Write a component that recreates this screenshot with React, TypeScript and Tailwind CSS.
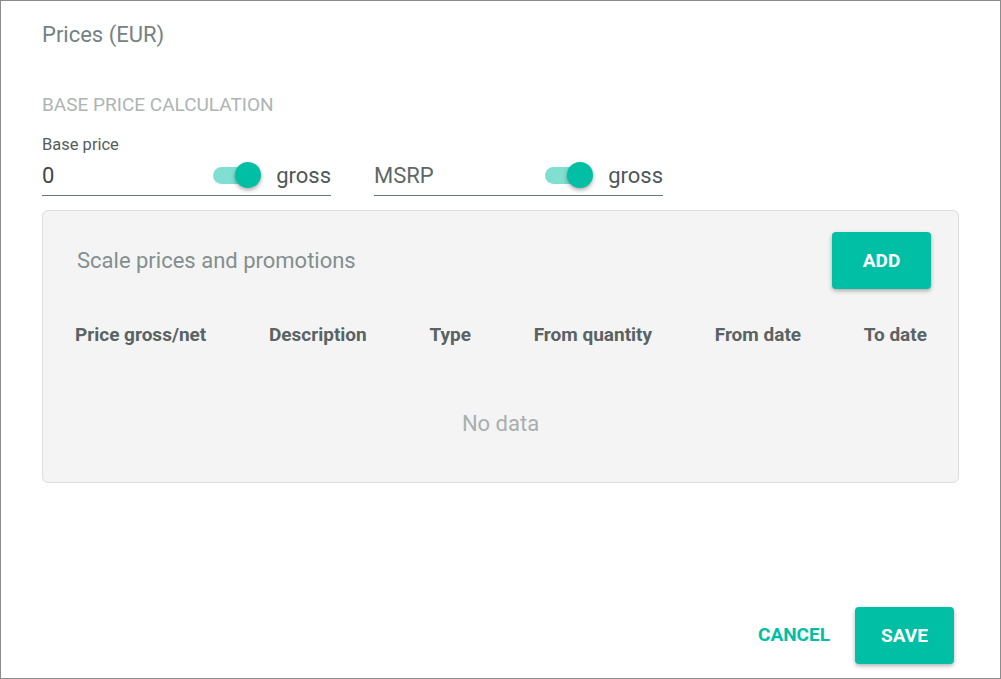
import React from "react"

const Toggle = () => (
  <div className="relative w-[50px] h-[28px] flex items-center">
    <div className="w-[44px] h-[17px] rounded-full bg-[#80dfd1]" />
    <div className="absolute right-[2px] top-[1px] w-[26px] h-[26px] rounded-full bg-[#00bfa5] shadow-[0_2px_4px_rgba(0,0,0,0.35)]" />
  </div>
)

const PriceField = ({ label, value }: { label?: string; value: string }) => (
  <div className="w-[289px]">
    <div className="h-[20px] text-[16.5px] text-[#555d5d] leading-[20px]">{label}</div>
    <div className="flex items-center h-[41px] border-b border-[#6f7474]">
      <span className={`flex-1 text-[22px] ${value === "0" ? "text-[#3f4747]" : "text-[#5f6868]"}`}>{value}</span>
      <Toggle />
      <span className="ml-[13px] text-[22px] text-[#4f5858]">gross</span>
    </div>
  </div>
)

export default function App() {
  const cols = ["Price gross/net", "Description", "Type", "From quantity", "From date", "To date"]
  return (
    <div
      className="w-[1001px] h-[679px] bg-white border border-[#8c8c8c] flex flex-col"
      style={{ fontFamily: "Roboto, 'Liberation Sans', sans-serif" }}
    >
      <div className="pl-[41px] pr-[41px] flex-1">
        <h1 className="mt-[21px] text-[22px] leading-[26px] text-[#748282]">Prices (EUR)</h1>

        <div className="mt-[46px] text-[19px] leading-[22px] text-[#aeb4b4]">BASE PRICE CALCULATION</div>

        <div className="mt-[19px] flex gap-[43px]">
          <PriceField label="Base price" value="0" />
          <PriceField value="MSRP" />
        </div>

        <div className="mt-[14px] h-[273px] bg-[#f4f4f4] border border-[#dcdcdc] rounded-[6px] flex flex-col">
          <div className="flex items-center justify-between pl-[34px] pr-[27px] pt-[21px]">
            <span className="text-[22px] text-[#858e8e]">Scale prices and promotions</span>
            <button className="w-[99px] h-[57px] pt-[1px] rounded-[4px] bg-[#00bfa5] text-white font-bold text-[19px] shadow-[0_2px_4px_rgba(0,0,0,0.3)]">
              ADD
            </button>
          </div>
          <div className="flex justify-between pl-[32px] pr-[31px] mt-[35px] leading-[22px]">
            {cols.map(c => (
              <span key={c} className="text-[19px] font-bold text-[#5a6363]">{c}</span>
            ))}
          </div>
          <div className="mt-[65px] text-center text-[22px] leading-[26px] text-[#a9afaf]">No data</div>
        </div>
      </div>

      <div className="flex items-center justify-end pr-[46px] pb-[14px]">
        <button className="mr-[25px] text-[19px] font-bold text-[#00bfa5]">CANCEL</button>
        <button className="w-[99px] h-[57px] pt-[1px] rounded-[4px] bg-[#00bfa5] text-white font-bold text-[19px] shadow-[0_2px_4px_rgba(0,0,0,0.3)]">
          SAVE
        </button>
      </div>
    </div>
  )
}
